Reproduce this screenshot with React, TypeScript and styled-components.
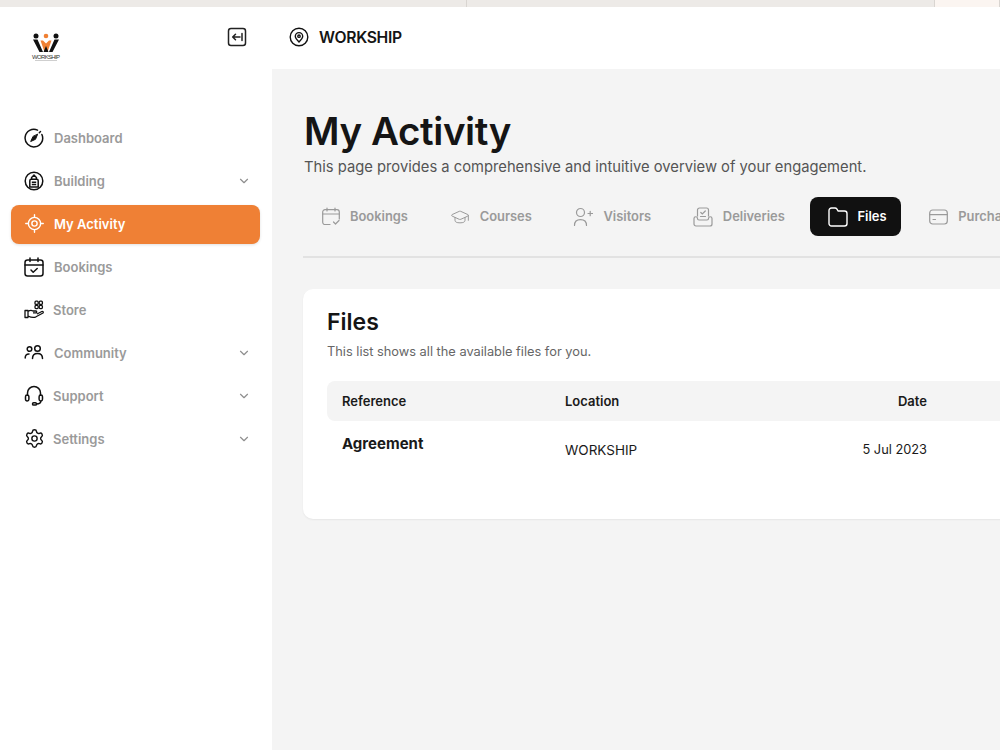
import React from "react";
import styled, { createGlobalStyle } from "styled-components";
import { ChevronDown, LocateFixed, Settings, GraduationCap } from "lucide-react";

const GlobalStyle = createGlobalStyle`
  html, body {
    margin: 0;
    height: 100%;
    overflow: hidden;
    background: #fff;
  }
  body {
    font-family: "Inter", "Liberation Sans", sans-serif;
    color: #111;
  }
  #root { height: 100%; }
`;

const LogoMark = () => (
  <svg width="30" height="30" viewBox="0 0 30 30">
    <circle cx="5" cy="3" r="2.500" fill="#111" />
    <circle cx="15" cy="3" r="2.300" fill="#f08033" />
    <circle cx="25" cy="3" r="2.500" fill="#111" />
    <path d="M2 6.500h4.500L12 19H8.500z M28 6.500h-4.500L18 19h3.500z" fill="#111" />
    <path d="M9.500 7.500H12l3 3 3-3h2.500L16.500 19h-3z" fill="#f08033" />
    <path d="M12.500 19l2.500-6 2.500 6z" fill="#111" />
    <text x="15" y="25.500" textAnchor="middle" fontSize="6" textLength="28" fontFamily="Liberation Sans" fill="#333">
      WORKSHIP
    </text>
    <rect x="4" y="27" width="22" height="0.700" fill="#bbb" />
  </svg>
);

const CollapseIcon = () => (
  <svg width="20" height="20" viewBox="0 0 20 20" fill="none" stroke="#222" strokeWidth="1.500">
    <rect x="1.500" y="1.500" width="17" height="17" rx="2.500" />
    <path d="M13 10H6M8.500 7.200 5.700 10l2.800 2.800M15 6.500v7" strokeLinecap="round" strokeLinejoin="round" />
  </svg>
);

const PinIcon = () => (
  <svg width="20" height="20" viewBox="0 0 20 20" fill="none" stroke="#111" strokeWidth="1.400">
    <circle cx="10" cy="10" r="8.800" />
    <path d="M10 15c-2-2-3.700-3.800-3.700-5.700a3.700 3.700 0 0 1 7.400 0C13.700 11.200 12 13 10 15z" />
    <circle cx="10" cy="9.200" r="1.200" />
  </svg>
);

const CompassIcon = () => (
  <svg width="20" height="20" viewBox="0 0 20 20" fill="none" stroke="#111" strokeWidth="1.500" strokeLinecap="round">
    <path d="M13.500 2.100A8.800 8.800 0 1 0 17.900 6.500" />
    <path d="M16.500 3.500l-1.200 1.200" />
    <path d="M13.500 6.500l-2 4.800-4.800 2.200 2.200-4.800z" fill="#111" strokeWidth="1" strokeLinejoin="round" />
  </svg>
);

const BuildingIcon = () => (
  <svg width="20" height="20" viewBox="0 0 20 20" fill="none" stroke="#111" strokeWidth="1.500">
    <circle cx="10" cy="10" r="8.800" />
    <path d="M5.800 16V9.800a1.500 1.500 0 0 1 1.500-1.500h5.400a1.500 1.500 0 0 1 1.500 1.500V16z" />
    <path d="M7.600 8.300V6.500L10 4l2.400 2.500v1.800M7.800 11.300h4.400M7.800 13.500h4.400" />
  </svg>
);

const CalendarIcon = () => (
  <svg width="20" height="20" viewBox="0 0 20 20" fill="none" stroke="#111" strokeWidth="1.500" strokeLinecap="round" strokeLinejoin="round">
    <rect x="1" y="3" width="18" height="16" rx="2.500" />
    <path d="M1 8h18M6 1v3.500M14 1v3.500M7 13l2.200 2.200L13.200 11.500" />
  </svg>
);

const StoreIcon = () => (
  <svg width="21" height="20" viewBox="0 0 21 20" fill="none" stroke="#111" strokeWidth="1.300">
    <path d="M1 10.500h3v7H1zM4 11.500c2-1.500 3.500-1.500 5 -.5h3c1 0 1 1.800 0 1.800H9M4 16c3 1.500 6 1.800 8 .8l7-3.800c.8-1 -.2-2-1.200-1.500L13 14" strokeLinejoin="round" />
    <rect x="11" y="1.200" width="3.200" height="3.200" rx="1" />
    <rect x="15.200" y="1.200" width="3.200" height="3.200" rx="1" />
    <rect x="11" y="5.400" width="3.200" height="3.200" rx="1" />
    <rect x="15.200" y="5.400" width="3.200" height="3.200" rx="1" />
  </svg>
);

const PeopleIcon = () => (
  <svg width="20" height="20" viewBox="0 0 20 20" fill="none" stroke="#111" strokeWidth="1.500" strokeLinecap="round">
    <circle cx="5.500" cy="6" r="2.300" />
    <circle cx="13.500" cy="5.500" r="2.800" />
    <path d="M1.200 15c0-2.500 1.500-4 3.800-4M8.500 15.500c0-3 2-5 5-5s5 2 5 5" />
  </svg>
);

const HeadsetIcon = () => (
  <svg width="20" height="21" viewBox="0 0 20 21" fill="none" stroke="#111" strokeWidth="1.500">
    <path d="M3.500 11V8a6.500 6.500 0 0 1 13 0v3" />
    <rect x="1.500" y="10" width="3.400" height="6" rx="1.700" />
    <rect x="15.100" y="10" width="3.400" height="6" rx="1.700" />
    <path d="M16.800 16c0 2.200-1.800 3-4.300 3" />
    <rect x="8.500" y="17.800" width="4" height="2.200" rx="1.100" />
  </svg>
);

const TabCalendarIcon = () => (
  <svg width="18" height="19" viewBox="0 0 18 19" fill="none" stroke="currentColor" strokeWidth="1.200" strokeLinecap="round" strokeLinejoin="round">
    <path d="M8 17.500H3a2.300 2.300 0 0 1-2.300-2.300V5A2.300 2.300 0 0 1 3 2.700h12A2.300 2.300 0 0 1 17.300 5v7" />
    <path d="M.7 7h16.600M5 1v3M13 1v3M11.500 15l2 2 3.500-3.500" />
  </svg>
);

const VisitorIcon = () => (
  <svg width="20" height="20" viewBox="0 0 20 20" fill="none" stroke="currentColor" strokeWidth="1.200" strokeLinecap="round">
    <circle cx="7.500" cy="5.500" r="4" />
    <path d="M1.500 18.500c0-3.700 2.500-5.800 6-5.800s6 2.100 6 5.800M15 6.500h4.500M17.200 4.300v4.400" />
  </svg>
);

const DeliveryIcon = () => (
  <svg width="20" height="20" viewBox="0 0 20 20" fill="none" stroke="currentColor" strokeWidth="1.200">
    <path d="M4.500 9.500V3a2 2 0 0 1 2-2h7a2 2 0 0 1 2 2v6.500" />
    <path d="M7.800 5.500l1.500 1.500 3-3M7.500 9.500h5" strokeLinecap="round" />
    <path d="M1 11.500a1.700 1.700 0 0 1 3.500 0c0 1 .8 1.500 1.500 1.500h8c.7 0 1.500-.5 1.500-1.500a1.700 1.700 0 0 1 3.500 0V17a2 2 0 0 1-2 2H3a2 2 0 0 1-2-2z" />
  </svg>
);

const FolderIcon = () => (
  <svg width="20" height="20" viewBox="0 0 20 20" fill="none" stroke="currentColor" strokeWidth="1.400" strokeLinejoin="round">
    <path d="M1 3.500A2.500 2.500 0 0 1 3.500 1H7c1 0 1.500.5 2 1.200L10 4h6.500A2.500 2.500 0 0 1 19 6.500V16.500a2.500 2.500 0 0 1-2.500 2.500h-13A2.500 2.500 0 0 1 1 16.500z" />
  </svg>
);

const CardIcon = () => (
  <svg width="19" height="20" viewBox="0 0 19 20" fill="none" stroke="currentColor" strokeWidth="1.200" strokeLinecap="round">
    <rect x="0.700" y="3" width="17.600" height="14" rx="3" />
    <path d="M.7 7.700h17.600M4 12.500h2.500" />
  </svg>
);

const Page = styled.div`
  display: flex;
  flex-direction: column;
  height: 100%;
`;

const BrowserStrip = styled.div`
  height: 7px;
  flex: none;
  display: flex;
  background: #edeae7;
`;

const StripTab = styled.div<{ $w: number; $light?: boolean }>`
  width: ${(p) => p.$w}px;
  flex: none;
  border-right: 1px solid #d9d5d1;
  background: ${(p) => (p.$light ? "#fbf5f1" : "transparent")};
  box-sizing: border-box;
`;

const Shell = styled.div`
  flex: 1;
  display: flex;
  min-height: 0;
`;

const Sidebar = styled.aside`
  width: 272px;
  flex: none;
  background: #fff;
  box-sizing: border-box;
  padding: 0 11px;
`;

const Brand = styled.div`
  height: 112px;
  display: flex;
  justify-content: space-between;
  align-items: flex-start;
  padding: 20px 14px 0 20px;
  box-sizing: border-box;
`;

const LogoSlot = styled.div`
  display: flex;
  margin-top: 6px;
`;

const IconButton = styled.div`
  display: flex;
`;

const Nav = styled.nav`
  display: flex;
  flex-direction: column;
  gap: 4px;
  width: 249px;
`;

const NavItem = styled.div<{ $active?: boolean; $gap?: number }>`
  height: 39px;
  box-sizing: border-box;
  display: flex;
  align-items: center;
  gap: ${(p) => p.$gap ?? 10}px;
  padding: 0 9px 2px 13px;
  border-radius: 8px;
  font-size: 13px;
  font-weight: 600;
  color: ${(p) => (p.$active ? "#fff" : "#9a9a9a")};
  background: ${(p) => (p.$active ? "#ef8035" : "transparent")};
  box-shadow: ${(p) => (p.$active ? "0 1px 3px rgba(0,0,0,.12)" : "none")};
  svg { flex: none; }
`;

const NavLabel = styled.span`
  flex: 1;
`;

const Main = styled.main`
  flex: 1;
  min-width: 0;
  display: flex;
  flex-direction: column;
`;

const TopBar = styled.header`
  height: 62px;
  flex: none;
  background: #fff;
  display: flex;
  align-items: center;
  gap: 10px;
  padding: 0 0 2px 17px;
  box-sizing: border-box;
  font-size: 15.700px;
  font-weight: 600;
  letter-spacing: -0.3px;
  color: #151515;
`;

const Content = styled.div`
  flex: 1;
  background: #f4f4f4;
  padding: 38px 0 0 31px;
  overflow: hidden;
`;

const Title = styled.h1`
  margin: 0 0 0 1px;
  font-size: 38.500px;
  line-height: 48px;
  font-weight: 600;
  letter-spacing: -0.4px;
  color: #151515;
`;

const Subtitle = styled.p`
  margin: 1px 0 0 1px;
  font-size: 14.750px;
  line-height: 22px;
  color: #555;
  white-space: nowrap;
`;

const Tabs = styled.div`
  display: flex;
  gap: 5.700px;
  width: 899px;
  margin-top: 19px;
  padding: 0 0 20px 1px;
  border-bottom: 2px solid #e2e2e2;
`;

const Tab = styled.div<{ $active?: boolean }>`
  height: 39px;
  display: flex;
  align-items: center;
  flex: none;
  gap: 10px;
  padding: ${(p) => (p.$active ? "0 14px 0 18px" : "0 18px")};
  margin: ${(p) => (p.$active ? "0 5px 0 1px" : "0")};
  border-radius: 8px;
  font-size: 12.900px;
  font-weight: 600;
  color: ${(p) => (p.$active ? "#fff" : "#9a9a9a")};
  background: ${(p) => (p.$active ? "#111" : "transparent")};
`;

const Card = styled.section`
  width: 900px;
  height: 230px;
  margin-top: 31px;
  box-sizing: border-box;
  padding: 19px 24px;
  background: #fff;
  border-radius: 10px;
  box-shadow: 0 1px 2px rgba(0, 0, 0, 0.06);
`;

const CardTitle = styled.h2`
  margin: 0;
  font-size: 23px;
  line-height: 28px;
  font-weight: 600;
  color: #151515;
`;

const CardText = styled.p`
  margin: 6px 0 0;
  font-size: 12.800px;
  line-height: 20px;
  color: #666;
`;

const tableColumns = "223px 223px 139px 1fr";

const TableHead = styled.div`
  display: grid;
  grid-template-columns: ${tableColumns};
  align-items: center;
  height: 40px;
  margin-top: 19px;
  padding-left: 15px;
  background: #f4f4f4;
  border-radius: 8px;
  font-size: 13px;
  font-weight: 600;
  color: #1a1a1a;
`;

const TableRow = styled.div`
  display: grid;
  grid-template-columns: ${tableColumns};
  padding-left: 15px;
  font-size: 13px;
  color: #1a1a1a;
`;

const RowName = styled.div`
  font-size: 15px;
  line-height: 20px;
  font-weight: 700;
  padding-top: 13px;
`;

const RowCell = styled.div<{ $right?: boolean }>`
  line-height: 20px;
  padding-top: 19px;
  font-size: ${(p) => (p.$right ? "12.800px" : "13.500px")};
  text-align: ${(p) => (p.$right ? "right" : "left")};
`;

const HeadDate = styled.div`
  text-align: right;
`;

const navItems = [
  { label: "Dashboard", icon: <CompassIcon /> },
  { label: "Building", icon: <BuildingIcon />, more: true },
  { label: "My Activity", icon: <LocateFixed size={21} color="#fff" strokeWidth={1.6} />, active: true, gap: 9 },
  { label: "Bookings", icon: <CalendarIcon /> },
  { label: "Store", icon: <StoreIcon />, gap: 8 },
  { label: "Community", icon: <PeopleIcon />, more: true },
  { label: "Support", icon: <HeadsetIcon />, more: true, gap: 9 },
  { label: "Settings", icon: <Settings size={21} color="#111" strokeWidth={1.6} />, more: true, gap: 8 },
];

const tabs = [
  { label: "Bookings", icon: <TabCalendarIcon /> },
  { label: "Courses", icon: <GraduationCap size={20} strokeWidth={1.2} /> },
  { label: "Visitors", icon: <VisitorIcon /> },
  { label: "Deliveries", icon: <DeliveryIcon /> },
  { label: "Files", icon: <FolderIcon />, active: true },
  { label: "Purchases", icon: <CardIcon /> },
];

export default function App() {
  return (
    <Page>
      <GlobalStyle />
      <BrowserStrip>
        <StripTab $w={467} />
        <StripTab $w={468} />
        <StripTab $w={65} $light />
      </BrowserStrip>
      <Shell>
        <Sidebar>
          <Brand>
            <LogoSlot>
              <LogoMark />
            </LogoSlot>
            <IconButton>
              <CollapseIcon />
            </IconButton>
          </Brand>
          <Nav>
            {navItems.map((item) => (
              <NavItem key={item.label} $active={item.active} $gap={item.gap}>
                {item.icon}
                <NavLabel>{item.label}</NavLabel>
                {item.more && <ChevronDown size={14} color="#8f8f8f" />}
              </NavItem>
            ))}
          </Nav>
        </Sidebar>
        <Main>
          <TopBar>
            <PinIcon />
            WORKSHIP
          </TopBar>
          <Content>
            <Title>My Activity</Title>
            <Subtitle>This page provides a comprehensive and intuitive overview of your engagement.</Subtitle>
            <Tabs>
              {tabs.map((tab) => (
                <Tab key={tab.label} $active={tab.active}>
                  {tab.icon}
                  {tab.label}
                </Tab>
              ))}
            </Tabs>
            <Card>
              <CardTitle>Files</CardTitle>
              <CardText>This list shows all the available files for you.</CardText>
              <TableHead>
                <div>Reference</div>
                <div>Location</div>
                <HeadDate>Date</HeadDate>
              </TableHead>
              <TableRow>
                <RowName>Agreement</RowName>
                <RowCell>WORKSHIP</RowCell>
                <RowCell $right>5 Jul 2023</RowCell>
              </TableRow>
            </Card>
          </Content>
        </Main>
      </Shell>
    </Page>
  );
}
